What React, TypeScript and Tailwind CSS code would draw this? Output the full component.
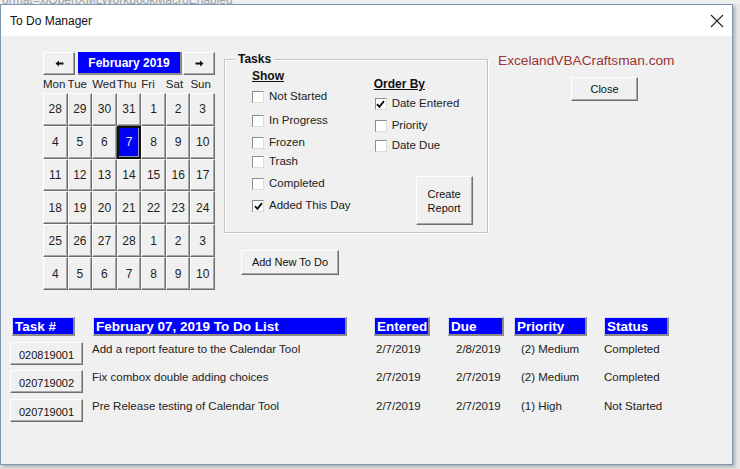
import React from "react";

const raised =
  "bg-[#f0f0f0] border border-t-white border-l-white border-r-[#6e6e6e] border-b-[#6e6e6e] shadow-[inset_-1px_-1px_0_#a8a8a8]";

const headerBox =
  "bg-[#0000ff] text-white font-bold text-[13.5px] h-[19px] leading-[17px] pl-[2px] border-t border-l border-t-[#d8d8ff] border-l-[#d8d8ff] border-r-2 border-b-2 border-r-[#8c8c8c] border-b-[#8c8c8c] whitespace-nowrap overflow-hidden";

const calendarDays = [
  28, 29, 30, 31, 1, 2, 3,
  4, 5, 6, 7, 8, 9, 10,
  11, 12, 13, 14, 15, 16, 17,
  18, 19, 20, 21, 22, 23, 24,
  25, 26, 27, 28, 1, 2, 3,
  4, 5, 6, 7, 8, 9, 10,
];

const dayNames = ["Mon", "Tue", "Wed", "Thu", "Fri", "Sat", "Sun"];

const todos = [
  {
    id: "020819001",
    text: "Add a report feature to the Calendar Tool",
    entered: "2/7/2019",
    due: "2/8/2019",
    priority: "(2) Medium",
    status: "Completed",
  },
  {
    id: "020719002",
    text: "Fix combox double adding choices",
    entered: "2/7/2019",
    due: "2/7/2019",
    priority: "(2) Medium",
    status: "Completed",
  },
  {
    id: "020719001",
    text: "Pre Release testing of Calendar Tool",
    entered: "2/7/2019",
    due: "2/7/2019",
    priority: "(1) High",
    status: "Not Started",
  },
];

function CheckBox({ checked = false }: { checked?: boolean }) {
  return (
    <span className="w-[12px] h-[12px] shrink-0 bg-white border border-t-[#8c8c8c] border-l-[#8c8c8c] border-r-[#dcdcdc] border-b-[#dcdcdc] flex items-center justify-center">
      {checked && (
        <svg width="9" height="9" viewBox="0 0 9 9">
          <path d="M1 4.2 L3.4 6.8 L8 1.2" stroke="#111" strokeWidth="1.9" fill="none" />
        </svg>
      )}
    </span>
  );
}

function CheckRow({
  label,
  checked,
  className = "",
}: {
  label: string;
  checked?: boolean;
  className?: string;
}) {
  return (
    <div className={`flex items-center h-[14px] gap-[5px] ${className}`}>
      <CheckBox checked={checked} />
      <span className="text-[11.5px] text-[#222] whitespace-nowrap">{label}</span>
    </div>
  );
}

function Calendar() {
  return (
    <div className="w-[172px] shrink-0">
      <div className="flex h-[23px]">
        <button type="button" className={`${raised} w-[32px] flex items-center justify-center`}>
          <svg width="9" height="7" viewBox="0 0 9 7">
            <path d="M0.5 3.5 L4 0.5 L4 2.6 L8.5 2.6 L8.5 4.4 L4 4.4 L4 6.5 Z" fill="#111" />
          </svg>
        </button>
        <div className="ml-[3px] w-[104px] bg-[#0000ff] border-r-2 border-b-2 border-r-[#8c8c8c] border-b-[#8c8c8c] text-white font-bold text-[12px] flex items-center justify-center">
          February 2019
        </div>
        <button type="button" className={`${raised} ml-[1px] w-[32px] flex items-center justify-center`}>
          <svg width="9" height="7" viewBox="0 0 9 7">
            <path d="M8.5 3.5 L5 0.5 L5 2.6 L0.5 2.6 L0.5 4.4 L5 4.4 L5 6.5 Z" fill="#111" />
          </svg>
        </button>
      </div>
      <div className="grid grid-cols-7 mt-[2px] h-[14px] text-[11.5px] text-[#222] leading-[14px]">
        {dayNames.map((d) => (
          <span key={d} className="whitespace-nowrap">
            {d}
          </span>
        ))}
      </div>
      <div className="grid grid-cols-7 grid-rows-6 mt-[2px] h-[197px]">
        {calendarDays.map((day, i) =>
          i === 10 ? (
            <div
              key={i}
              className="border-2 border-[#111] bg-[#0000f4] text-[#e8e8ff] text-[12px] flex items-center justify-center shadow-[inset_-1px_-1px_0_#9a9ab8]"
            >
              {day}
            </div>
          ) : (
            <div
              key={i}
              className={`${raised} text-[12px] text-[#1e1e1e] flex items-center justify-center`}
            >
              {day}
            </div>
          )
        )}
      </div>
    </div>
  );
}

function TasksPanel() {
  return (
    <div className="ml-[9px] shrink-0">
      <div className="relative mt-[7px] w-[264px] h-[174px] border border-[#c4c4c4] shadow-[inset_1px_1px_0_#ffffff,1px_1px_0_#ffffff] flex">
        <span className="absolute -top-[8px] left-[10px] px-[3px] bg-[#f0f0f0] text-[12px] font-bold leading-[14px] text-[#111]">
          Tasks
        </span>
        <div className="pl-[27px] flex flex-col">
          <span className="mt-[9px] h-[14px] leading-[14px] text-[12px] font-bold underline text-[#111]">
            Show
          </span>
          <CheckRow label="Not Started" className="mt-[7px]" />
          <CheckRow label="In Progress" className="mt-[10px]" />
          <CheckRow label="Frozen" className="mt-[8px]" />
          <CheckRow label="Trash" className="mt-[5px]" />
          <CheckRow label="Completed" className="mt-[8px]" />
          <CheckRow label="Added This Day" checked className="mt-[8px]" />
        </div>
        <div className="ml-[22px] flex flex-col pl-[1px]">
          <span className="mt-[17px] h-[14px] leading-[14px] text-[12px] font-bold underline text-[#111]">
            Order By
          </span>
          <CheckRow label="Date Entered" checked className="mt-[6px] ml-[1px]" />
          <CheckRow label="Priority" className="mt-[8px] ml-[1px]" />
          <CheckRow label="Date Due" className="mt-[6px] ml-[1px]" />
          <button
            type="button"
            className={`${raised} mt-[23px] ml-[42px] w-[57px] h-[49px] text-[11px] leading-[14px] text-[#111]`}
          >
            Create
            <br />
            Report
          </button>
        </div>
      </div>
      <button
        type="button"
        className={`${raised} mt-[17px] ml-[17px] w-[98px] h-[25px] text-[11px] text-[#111]`}
      >
        Add New To Do
      </button>
    </div>
  );
}

export default function App() {
  return (
    <div className="w-[740px] h-[469px] bg-[#e4e6e8] overflow-hidden font-['Liberation_Sans',Arial,sans-serif]">
      <div className="h-[4px] overflow-hidden bg-[#eeeeee]">
        <div className="-mt-[9px] pl-[2px] text-[12px] text-[#9aa0a6] whitespace-nowrap">
          ormat=xlOpenXMLWorkbookMacroEnabled
        </div>
      </div>
      <div className="w-[733px] h-[461px] border border-[#8196b0] bg-[#f0f0f0] flex flex-col shadow-[2px_2px_3px_rgba(0,0,0,0.25)]">
        <div className="h-[31px] bg-white flex items-center justify-between pl-[9px] pr-[8px]">
          <span className="text-[12px] text-[#111]">To Do Manager</span>
          <svg width="14" height="14" viewBox="0 0 14 14">
            <path d="M1 1 L13 13 M13 1 L1 13" stroke="#222" strokeWidth="1.1" />
          </svg>
        </div>
        <div className="flex-1 flex flex-col">
          <div className="flex pt-[16px] pl-[42px]">
            <Calendar />
            <TasksPanel />
            <div className="ml-[10px] flex flex-col">
              <span className="mt-[1px] h-[16px] leading-[16px] text-[13.7px] text-[#9b3434] whitespace-nowrap">
                ExcelandVBACraftsman.com
              </span>
              <button
                type="button"
                className={`${raised} mt-[8px] ml-[73px] w-[67px] h-[24px] text-[11px] text-[#111]`}
              >
                Close
              </button>
            </div>
          </div>

          <div className="mt-[27px] pl-[9px] flex flex-col">
            <div className="flex h-[19px]">
              <div className="w-[82px]">
                <div className={`${headerBox} ml-[2px] w-[63px]`}>Task #</div>
              </div>
              <div className="w-[282px]">
                <div className={`${headerBox} ml-[1px] w-[254px]`}>
                  February 07, 2019 To Do List
                </div>
              </div>
              <div className="w-[74px]">
                <div className={`${headerBox} w-[56px]`}>Entered</div>
              </div>
              <div className="w-[66px]">
                <div className={`${headerBox} w-[56px]`}>Due</div>
              </div>
              <div className="w-[90px]">
                <div className={`${headerBox} w-[73px]`}>Priority</div>
              </div>
              <div className={`${headerBox} w-[65px]`}>Status</div>
            </div>

            {todos.map((todo, index) => (
              <div
                key={todo.id}
                className={`flex items-start h-[23px] text-[11.5px] leading-[14px] text-[#222] ${
                  index === 0 ? "mt-[6px]" : index === 1 ? "mt-[5px]" : "mt-[6px]"
                }`}
              >
                <div className="w-[82px]">
                  <button
                    type="button"
                    className={`${raised} w-[73px] h-[23px] text-[11px] pt-[2px] text-[#111]`}
                  >
                    {todo.id}
                  </button>
                </div>
                <div className="w-[282px] whitespace-nowrap">{todo.text}</div>
                <div className="w-[74px] pl-[2px]">{todo.entered}</div>
                <div className="w-[66px] pl-[8px]">{todo.due}</div>
                <div className="w-[90px] pl-[7px]">{todo.priority}</div>
                <div className="whitespace-nowrap">{todo.status}</div>
              </div>
            ))}
          </div>
        </div>
      </div>
    </div>
  );
}
